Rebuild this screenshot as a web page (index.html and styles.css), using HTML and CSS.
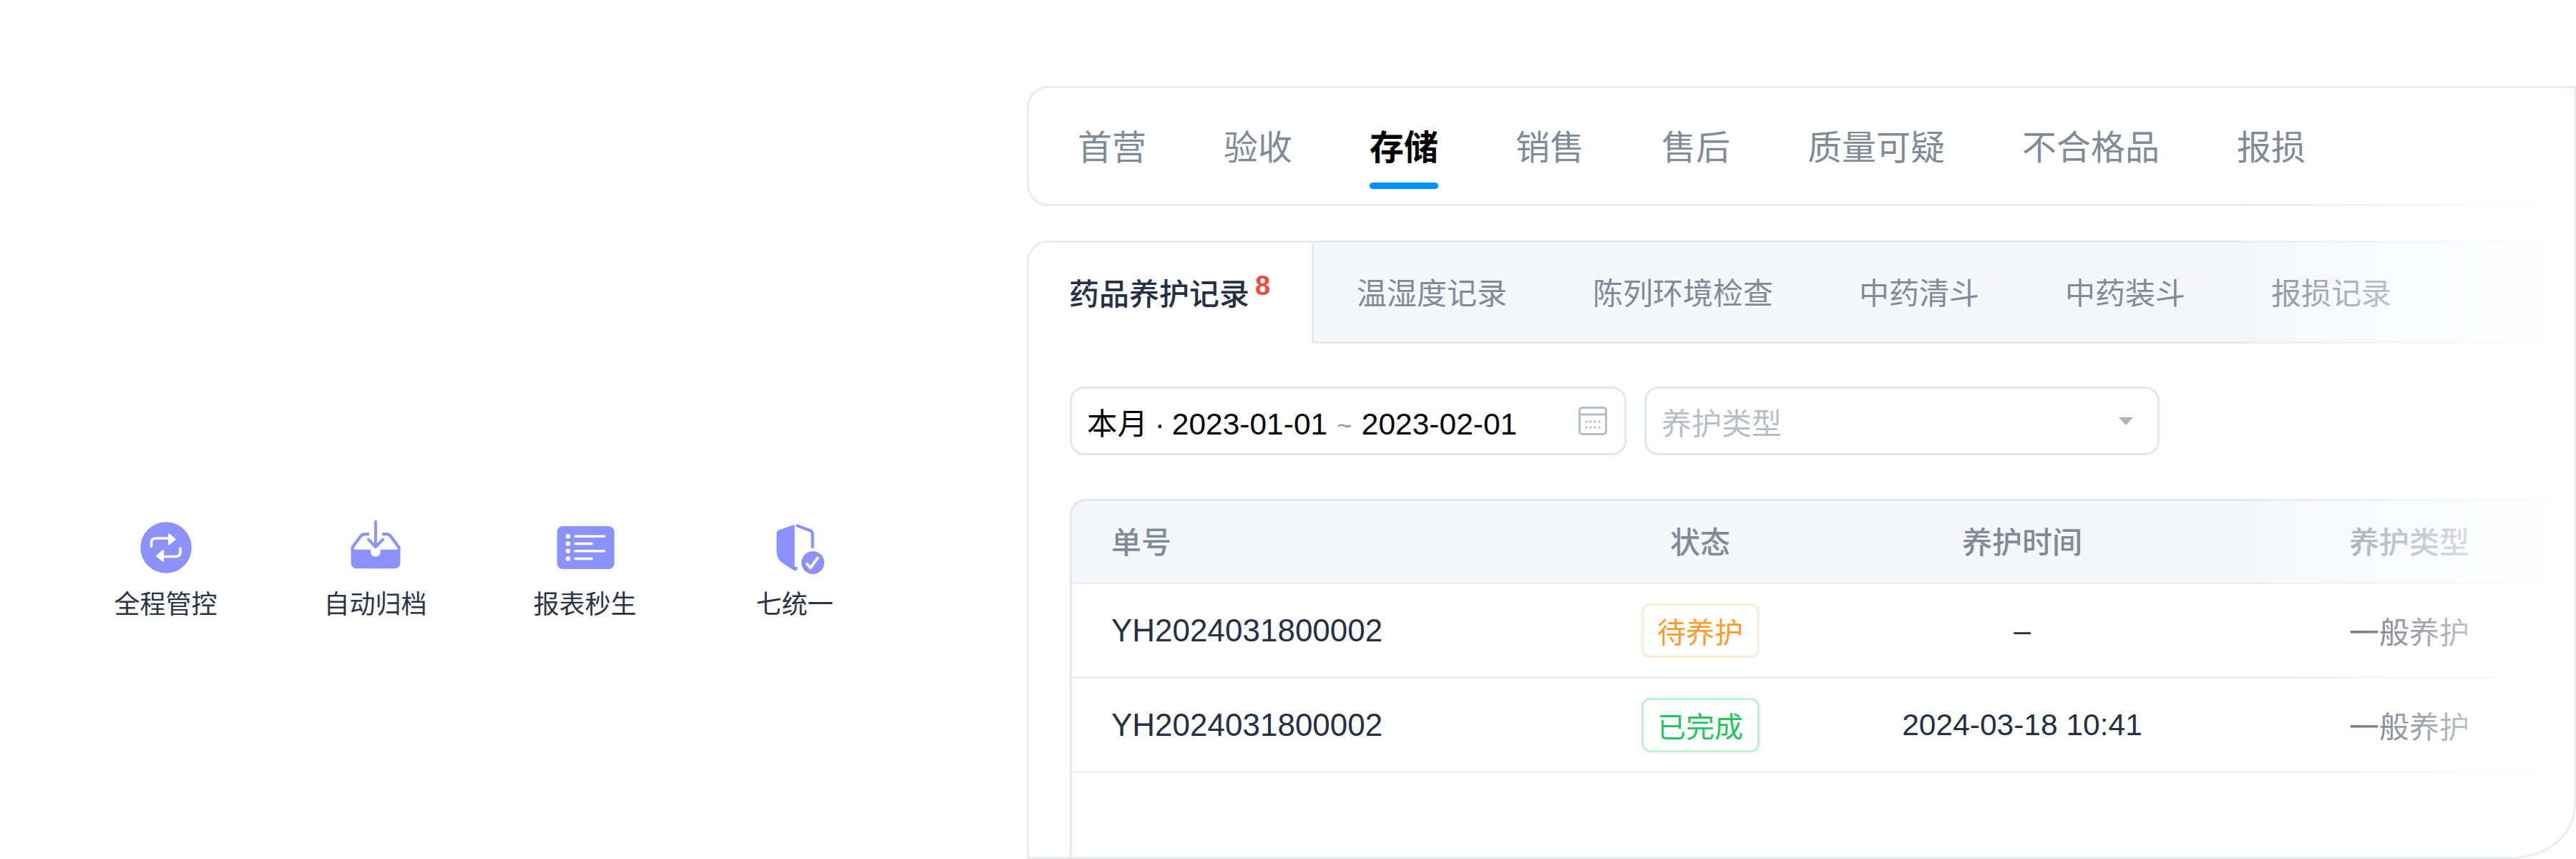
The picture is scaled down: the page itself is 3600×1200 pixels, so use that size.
FILE: index.html
```html
<!DOCTYPE html>
<html lang="zh-CN">
<head>
    <meta charset="UTF-8">
    <meta name="viewport" content="width=device-width, initial-scale=1.0">
    <title>药品养护记录</title>
    <link rel="stylesheet" href="styles.css">
</head>
<body>
    <section class="features">
        <div class="feature">
            <svg class="feature-icon" viewBox="-6 -6 84 84">
                <circle cx="36" cy="36" r="35.75" fill="#8c92fd"/>
                <path d="M15.5 34.5V29.5Q15.5 23 22 23H41" fill="none" stroke="#fff" stroke-width="3.6" stroke-linecap="round"/>
                <path d="M40 17L48.5 24.5L40 31.5Z" fill="#fff" stroke="#fff" stroke-width="2" stroke-linejoin="round"/>
                <path d="M56 37V42Q56 48.5 49.5 48.5H31" fill="none" stroke="#fff" stroke-width="3.6" stroke-linecap="round"/>
                <path d="M32 40L23 47.5L32 55Z" fill="#fff" stroke="#fff" stroke-width="2" stroke-linejoin="round"/>
            </svg>
            <span class="feature-label">全程管控</span>
        </div>
        <div class="feature">
            <svg class="feature-icon" viewBox="-7.5 -3.7 84 84">
                <path d="M25.5 19.5H20Q15.5 19.5 13 23L2 38V42M43.5 19.5H49Q53.5 19.5 56 23L67 38V42" fill="none" stroke="#8c92fd" stroke-width="4.2"/>
                <path d="M0 43a2 2 0 0 1 2-2H27.3v3a7 7 0 0 0 14 0v-3H67a2 2 0 0 1 2 2V60a7.5 7.5 0 0 1-7.5 7.5H7.5A7.5 7.5 0 0 1 0 60Z" fill="#8c92fd"/>
                <path d="M34.4 2V37M24.5 27L34.4 37.5L44.5 27" fill="none" stroke="#8c92fd" stroke-width="4" stroke-linecap="round" stroke-linejoin="round"/>
            </svg>
            <span class="feature-label">自动归档</span>
        </div>
        <div class="feature">
            <svg class="feature-icon" viewBox="-2.5 -12 84 84">
                <rect width="80" height="60" rx="8" fill="#8c92fd"/>
                <g fill="#fff">
                    <circle cx="15.3" cy="14.3" r="3.2"/>
                    <circle cx="15.3" cy="24.5" r="3.2"/>
                    <circle cx="15.3" cy="34.7" r="3.2"/>
                    <circle cx="15.3" cy="45.5" r="3.2"/>
                </g>
                <path d="M25.5 14.3H66M25.5 24.5H48.5M25.5 34.7H66M25.5 45.5H48.5" fill="none" stroke="#fff" stroke-width="3.6" stroke-linecap="round"/>
            </svg>
            <span class="feature-label">报表秒生</span>
        </div>
        <div class="feature">
            <svg class="feature-icon" viewBox="-16.3 -8.7 84 84">
                <path d="M25.3 1L3.5 8.5Q0 10 0 13.5V39Q0 49 8 54.5L24 65Q26.5 66.5 28.5 64.5L29.5 60H25.3Z" fill="#8c92fd"/>
                <path d="M27.5 2.2L47 9.5Q50.2 11 50.2 14V34" fill="none" stroke="#8c92fd" stroke-width="4.2"/>
                <circle cx="50.7" cy="54.3" r="17.5" fill="#fff"/>
                <circle cx="50.7" cy="54.3" r="16" fill="#8c92fd"/>
                <path d="M42.5 56L47.5 61.5L57.5 47.5" fill="none" stroke="#fff" stroke-width="3.8" stroke-linecap="round" stroke-linejoin="round"/>
            </svg>
            <span class="feature-label">七统一</span>
        </div>
    </section>

    <section class="panel">
        <nav class="main-nav">
            <a class="main-nav-item">首营</a>
            <a class="main-nav-item">验收</a>
            <a class="main-nav-item active">存储</a>
            <a class="main-nav-item">销售</a>
            <a class="main-nav-item">售后</a>
            <a class="main-nav-item">质量可疑</a>
            <a class="main-nav-item">不合格品</a>
            <a class="main-nav-item">报损</a>
        </nav>

        <div class="record-card">
            <div class="tabs">
                <a class="tab active">药品养护记录<span class="tab-count">8</span></a>
                <a class="tab">温湿度记录</a>
                <a class="tab">陈列环境检查</a>
                <a class="tab">中药清斗</a>
                <a class="tab">中药装斗</a>
                <a class="tab">报损记录</a>
            </div>

            <div class="content">
                <div class="filters">
                    <div class="field date-field">
                        <span class="date-range">本月 · 2023-01-01 <span class="tilde">~</span> 2023-02-01</span>
                        <svg class="calendar" viewBox="0 0 40 40">
                            <rect x="1.5" y="1.5" width="37" height="37" rx="4" fill="none" stroke="#b5bdc9" stroke-width="3"/>
                            <path d="M2 11H38" stroke="#b5bdc9" stroke-width="3"/>
                            <g fill="#b5bdc9">
                                <circle cx="11" cy="21" r="1.7"/>
                                <circle cx="17" cy="21" r="1.7"/>
                                <circle cx="23" cy="21" r="1.7"/>
                                <circle cx="29" cy="21" r="1.7"/>
                                <circle cx="11" cy="29" r="1.7"/>
                                <circle cx="17" cy="29" r="1.7"/>
                                <circle cx="23" cy="29" r="1.7"/>
                                <circle cx="29" cy="29" r="1.7"/>
                            </g>
                        </svg>
                    </div>
                    <div class="field select-field">
                        <span>养护类型</span>
                        <span class="select-arrow"></span>
                    </div>
                </div>

                <div class="table-wrap">
                    <table class="records">
                        <thead>
                            <tr>
                                <th class="col-no">单号</th>
                                <th class="col-status">状态</th>
                                <th class="col-time">养护时间</th>
                                <th class="col-type">养护类型</th>
                            </tr>
                        </thead>
                        <tbody>
                            <tr>
                                <td class="col-no">YH2024031800002</td>
                                <td class="col-status"><span class="status pending">待养护</span></td>
                                <td class="col-time">–</td>
                                <td class="col-type">一般养护</td>
                            </tr>
                            <tr>
                                <td class="col-no">YH2024031800002</td>
                                <td class="col-status"><span class="status done">已完成</span></td>
                                <td class="col-time">2024-03-18 10:41</td>
                                <td class="col-type">一般养护</td>
                            </tr>
                        </tbody>
                    </table>
                </div>
            </div>
        </div>

        <div class="fade-right"></div>
    </section>
</body>
</html>
```

FILE: styles.css
```css
* {
    box-sizing: border-box;
}

body {
    margin: 0;
    height: 1200px;
    padding-top: 120px;
    display: flex;
    overflow: hidden;
    background-color: #fff;
    font-family: "Liberation Sans", "Noto Sans CJK SC", sans-serif;
    color: #253045;
}

/* left column */
.features {
    width: 1435px;
    flex-shrink: 0;
    padding: 603px 0 0 85px;
    display: grid;
    grid-template-columns: repeat(4, 293px);
    align-content: start;
}

.feature {
    display: flex;
    flex-direction: column;
    align-items: center;
}

.feature-icon {
    width: 84px;
    height: 84px;
}

.feature-label {
    margin-top: 13px;
    font-size: 36px;
    line-height: 50px;
    color: #2b3447;
}

/* right panel */
.panel {
    flex: 1;
    position: relative;
    display: flex;
    flex-direction: column;
    height: 1080px;
    overflow: hidden;
    border-right: 3px solid #e8ebf0;
    border-bottom: 3px solid #e8ebf0;
    border-bottom-right-radius: 90px 75px;
}

.main-nav {
    height: 168px;
    flex-shrink: 0;
    padding-left: 68px;
    display: flex;
    gap: 108px;
    align-items: center;
    border: 3px solid #e8ebf0;
    border-right: none;
    border-radius: 30px 0 0 30px;
    font-size: 48px;
    color: #7f8b99;
}

.main-nav-item {
    position: relative;
    height: 100%;
    padding-bottom: 4px;
    display: flex;
    align-items: center;
}

.main-nav-item.active {
    color: #000;
    font-weight: 700;
}

.main-nav-item.active::after {
    content: "";
    position: absolute;
    left: 0;
    right: 0;
    bottom: 21px;
    height: 9px;
    border-radius: 5px;
    background-color: #0091ff;
}

.record-card {
    flex: 1;
    margin-top: 48px;
    display: flex;
    flex-direction: column;
    min-height: 0;
    overflow: hidden;
    border-top: 3px solid #e8ebf0;
    border-left: 3px solid #e8ebf0;
    border-top-left-radius: 30px;
}

.tabs {
    height: 141px;
    flex-shrink: 0;
    display: flex;
    background-color: #f5f7fb;
    border-bottom: 3px solid #e8ebf0;
    font-size: 42px;
    color: #7f8b99;
}

.tab {
    padding: 0 60px 4px;
    display: flex;
    align-items: center;
}

.tab.active {
    width: 398px;
    height: 141px;
    padding: 0 0 4px 56px;
    background-color: #fff;
    border-right: 3px solid #e8ebf0;
    color: #253045;
    font-weight: 500;
}

.tab-count {
    align-self: flex-start;
    margin: 40px 0 0 8px;
    font-size: 38px;
    line-height: 40px;
    font-weight: 700;
    color: #f04b3a;
}

.content {
    flex: 1;
    min-height: 0;
    padding: 60px 0 0 57px;
    display: flex;
    flex-direction: column;
}

.filters {
    display: flex;
    gap: 25px;
    font-size: 42px;
}

.field {
    height: 96px;
    display: flex;
    align-items: center;
    justify-content: space-between;
    border: 3px solid #e2e6f0;
    border-radius: 20px;
    background-color: #fff;
}

.date-field {
    width: 778px;
    padding: 0 24px 0 21px;
    color: #000;
}

.date-range {
    font-size: 42.5px;
    word-spacing: -2px;
}

.tilde {
    margin: 0 3.5px;
    font-size: 36px;
    color: #8f99a6;
}

.calendar {
    width: 40px;
    height: 40px;
}

.select-field {
    width: 720px;
    padding: 0 34px 0 21px;
    color: #b7bec7;
}

.select-arrow {
    width: 0;
    height: 0;
    border-left: 10px solid transparent;
    border-right: 10px solid transparent;
    border-top: 11px solid #a9b2bd;
}

.table-wrap {
    flex: 1;
    margin-top: 61px;
    border-top: 3px solid #e2e6f0;
    border-left: 3px solid #e2e6f0;
    border-top-left-radius: 22px;
    overflow: hidden;
}

.records {
    width: 100%;
    table-layout: fixed;
    border-collapse: separate;
    border-spacing: 0;
    font-size: 42px;
}

.records th {
    height: 116px;
    padding-bottom: 6px;
    background-color: #f5f7fb;
    border-bottom: 3px solid #ebeef3;
    font-weight: 500;
    color: #7f8b99;
}

.records td {
    height: 132px;
    border-bottom: 3px solid #ebeef3;
    text-align: center;
}

.records .col-no {
    width: 678px;
    padding-left: 55px;
    text-align: left;
}

td.col-no {
    font-size: 44px;
}

.col-status {
    width: 400px;
}

.col-time {
    width: 500px;
}

td.col-time {
    font-size: 42.5px;
}

.records .col-type {
    padding-left: 207px;
    text-align: left;
}

.status {
    width: 165px;
    height: 76px;
    display: inline-flex;
    align-items: center;
    justify-content: center;
    border: 3px solid;
    border-radius: 12px;
    font-size: 40px;
    vertical-align: middle;
}

.status.pending {
    border-color: #ffebd9;
    color: #ff9a2e;
}

.status.done {
    border-color: #bcf3d1;
    color: #22c55e;
}

/* white fade over the right edge of the cards */
.fade-right {
    position: absolute;
    top: 160px;
    right: 0;
    bottom: 0;
    width: 477px;
    background: linear-gradient(to right, rgba(255, 255, 255, 0) 0, #fff 465px);
}
```
